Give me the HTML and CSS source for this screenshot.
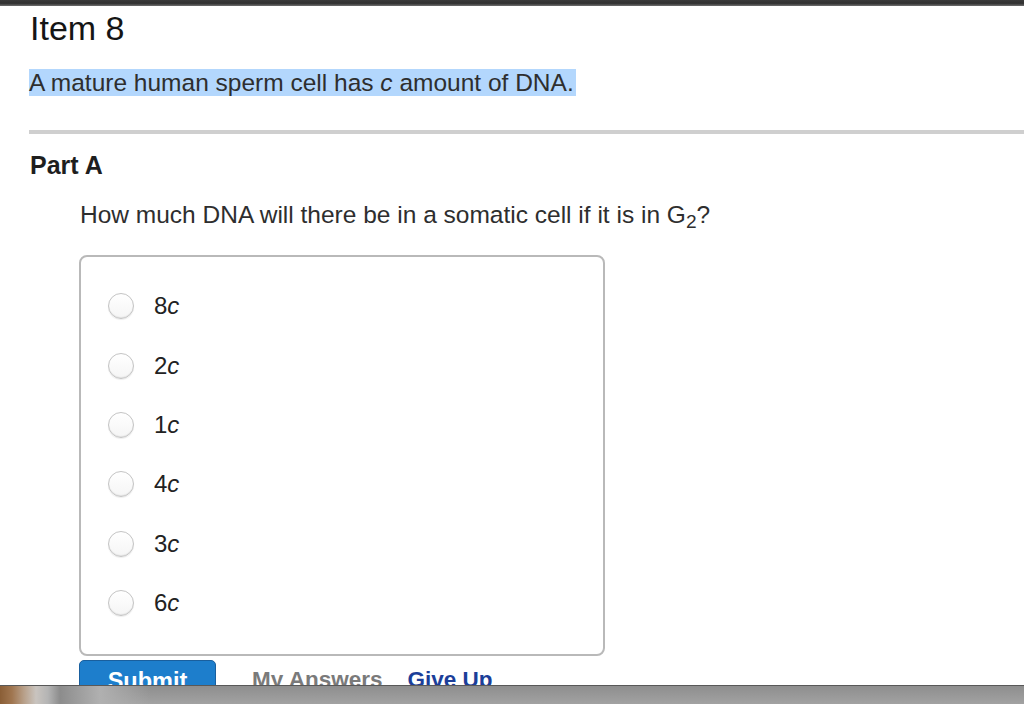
FILE: index.html
```html
<!DOCTYPE html>
<html>
<head>
<meta charset="utf-8">
<link rel="stylesheet" href="styles.css">
</head>
<body>
<div class="topbar"></div>
<main class="page">
  <h1 class="item-title">Item 8</h1>
  <p class="intro"><span class="hl">A mature human sperm cell has <i>c</i> amount of DNA.</span></p>
  <div class="rule"></div>
  <h2 class="part">Part A</h2>
  <div class="part-body">
    <p class="question">How much DNA will there be in a somatic cell if it is in G<sub>2</sub>?</p>
    <div class="choices">
      <label class="choice"><span class="radio"></span><span class="lbl">8<i>c</i></span></label>
      <label class="choice"><span class="radio"></span><span class="lbl">2<i>c</i></span></label>
      <label class="choice"><span class="radio"></span><span class="lbl">1<i>c</i></span></label>
      <label class="choice"><span class="radio"></span><span class="lbl">4<i>c</i></span></label>
      <label class="choice"><span class="radio"></span><span class="lbl">3<i>c</i></span></label>
      <label class="choice"><span class="radio"></span><span class="lbl">6<i>c</i></span></label>
    </div>
    <div class="actions">
      <button class="submit">Submit</button>
      <span class="link my">My Answers</span>
      <span class="link give">Give Up</span>
    </div>
  </div>
</main>
<div class="bottombar"></div>
</body>
</html>
```
FILE: styles.css
```css
html, body {
  margin: 0;
  padding: 0;
  background: #fff;
  overflow: hidden;
  font-family: "Liberation Sans", Arial, Helvetica, sans-serif;
}
.topbar {
  height: 6px;
  background: linear-gradient(#3a3a3a, #303030 55%, #6e6e6e);
}
.page {
  padding-left: 29px;
}
.item-title {
  margin: 2px 0 0 1px;
  font-size: 34px;
  line-height: 40px;
  font-weight: normal;
  color: #151515;
}
.intro {
  margin: 21px 0 0 0;
  font-size: 24.5px;
  line-height: 28px;
  color: #2e2e2e;
}
.hl {
  background: #b3d7fd;
  padding: 0 2px 0 0;
}
.rule {
  margin-top: 33px;
  height: 4px;
  background: #cfcfcf;
}
.part {
  margin: 15.5px 0 0 1px;
  font-size: 25px;
  line-height: 30px;
  font-weight: bold;
  color: #1e1e1e;
}
.part-body {
  padding-left: 50px;
}
.question {
  margin: 21px 0 0 1px;
  font-size: 24.5px;
  line-height: 28px;
  color: #2e2e2e;
}
.question sub {
  font-size: 0.78em;
  vertical-align: -0.28em;
  line-height: 0;
}
.choices {
  margin-top: 26px;
  box-sizing: border-box;
  width: 526px;
  height: 401px;
  border: 2px solid #b9b9b9;
  border-radius: 8px;
  padding-top: 20px;
  display: flex;
  flex-direction: column;
}
.choice {
  height: 59.4px;
  display: flex;
  align-items: center;
  padding-left: 27px;
}
.radio {
  width: 26px;
  height: 26px;
  box-sizing: border-box;
  border-radius: 50%;
  border: 1.5px solid #c4c4c4;
  background: linear-gradient(#ffffff, #f5f5f5);
  box-shadow: inset 0 -1px 1px rgba(0,0,0,0.08), 0 1px 1px rgba(0,0,0,0.07);
  flex: none;
}
.lbl {
  margin-left: 20px;
  font-size: 24px;
  color: #222;
  line-height: 28px;
}
.actions {
  margin-top: 4px;
  display: flex;
  align-items: flex-start;
}
.submit {
  width: 137px;
  height: 42px;
  background: #1d7ecc;
  border: 1px solid #195f9e;
  border-radius: 5px;
  color: #fff;
  font-family: "Liberation Sans", Arial, sans-serif;
  font-weight: bold;
  font-size: 23.5px;
  line-height: 24px;
  padding: 0;
  text-align: center;
  box-sizing: border-box;
}
.link {
  font-weight: bold;
  font-size: 22.5px;
  line-height: 24px;
  padding-top: 8px;
}
.my {
  margin-left: 36px;
  color: #7a7a7a;
}
.give {
  margin-left: 25px;
  color: #1b3e99;
}
.bottombar {
  position: fixed;
  left: 0;
  right: 0;
  bottom: 0;
  height: 19px;
  border-top: 1px solid #585858;
  box-sizing: border-box;
  background:
    linear-gradient(90deg, #8a5e36 0px, #a07650 12px, #b8a08a 24px, #c9c4bf 36px, #b4b4b4 48px, #8c8c8c 60px, #9a9a9a 75px, #b0b0b0 100px, rgba(160,160,160,0) 150px),
    linear-gradient(#8e8e8e, #a2a2a2);
}
```
